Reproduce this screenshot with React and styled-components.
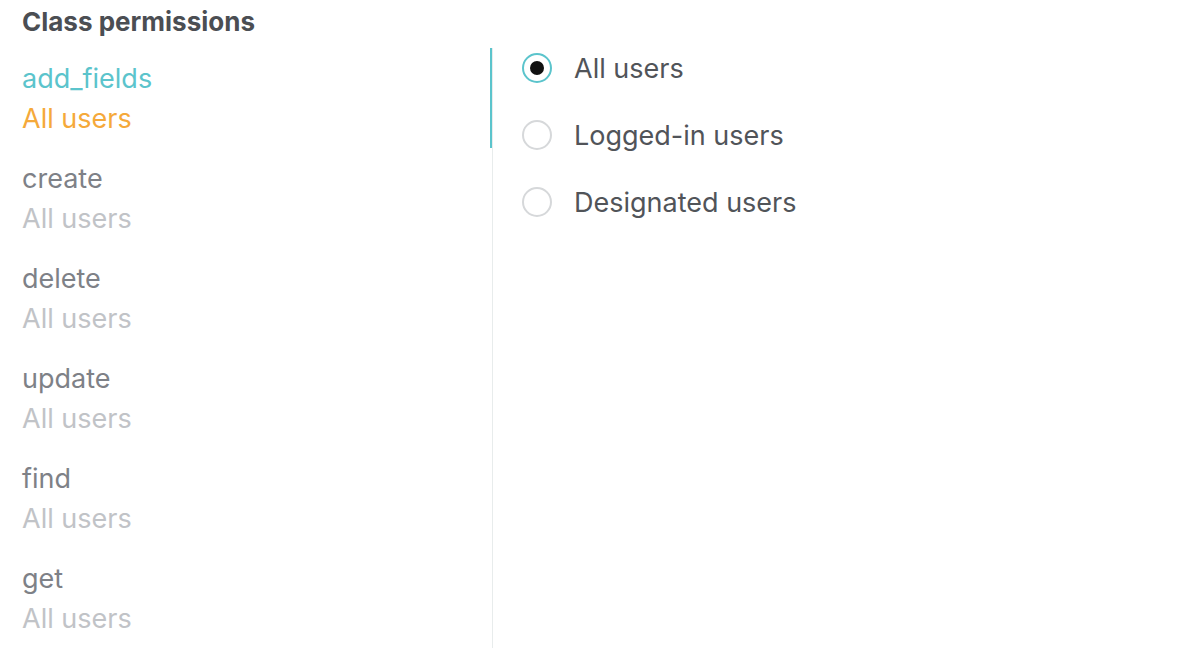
import React, { useState } from "react";
import styled, { createGlobalStyle } from "styled-components";

const GlobalStyle = createGlobalStyle`
  html, body { margin: 0; padding: 0; background: #ffffff; }
  body { font-family: Inter, "Noto Sans", "Liberation Sans", sans-serif; -webkit-font-smoothing: antialiased; }
  * { box-sizing: border-box; }
`;

const Page = styled.div`
  width: 1198px;
  height: 670px;
  background: #fff;
  overflow: hidden;
`;

const Title = styled.h2`
  margin: 0;
  padding: 0 0 0 22px;
  height: 48px;
  line-height: 44px;
  font-size: 26px;
  font-weight: 700;
  color: #4b4e53;
`;

const Columns = styled.div`
  display: flex;
  align-items: flex-start;
`;

const OpList = styled.ul`
  list-style: none;
  margin: 0;
  padding: 0;
  width: 493px;
  border-right: 1px solid #e8ecec;
`;

const OpItem = styled.li`
  position: relative;
  height: 100px;
  padding: 11px 0 9px 22px;
  cursor: pointer;
  &::after {
    content: "";
    position: absolute;
    top: 0;
    bottom: 0;
    right: 0;
    width: 2px;
    background: ${(p) => (p.$active ? "#5bc4cc" : "transparent")};
  }
`;

const OpName = styled.div`
  font-size: 27px;
  line-height: 40px;
  color: ${(p) => (p.$active ? "#5bc4cc" : "#7e8187")};
`;

const OpValue = styled.div`
  font-size: 27px;
  line-height: 40px;
  color: ${(p) => (p.$active ? "#f5a93a" : "#c1c3c7")};
`;

const Options = styled.div`
  display: flex;
  flex-direction: column;
  gap: 27px;
  padding-left: 29px;
`;

const OptionRow = styled.label`
  display: flex;
  align-items: center;
  height: 40px;
  gap: 22px;
  cursor: pointer;
`;

const RadioCircle = styled.span`
  width: 30px;
  height: 30px;
  border-radius: 50%;
  border: 2px solid ${(p) => (p.$checked ? "#5bc4cc" : "#d6d8da")};
  display: flex;
  align-items: center;
  justify-content: center;
  flex: none;
  &::after {
    content: "";
    width: 14px;
    height: 14px;
    border-radius: 50%;
    background: ${(p) => (p.$checked ? "#111" : "transparent")};
  }
`;

const OptionLabel = styled.span`
  font-size: 27px;
  color: #515459;
`;

const ops = ["add_fields", "create", "delete", "update", "find", "get"];
const choices = ["All users", "Logged-in users", "Designated users"];

export default function App() {
  const [active, setActive] = useState("add_fields");
  const [choice, setChoice] = useState("All users");
  return (
    <Page>
      <GlobalStyle />
      <Title>Class permissions</Title>
      <Columns>
        <OpList>
          {ops.map((op) => (
            <OpItem key={op} $active={op === active} onClick={() => setActive(op)}>
              <OpName $active={op === active}>{op}</OpName>
              <OpValue $active={op === active}>All users</OpValue>
            </OpItem>
          ))}
        </OpList>
        <Options>
          {choices.map((c) => (
            <OptionRow key={c} onClick={() => setChoice(c)}>
              <RadioCircle $checked={c === choice} />
              <OptionLabel>{c}</OptionLabel>
            </OptionRow>
          ))}
        </Options>
      </Columns>
    </Page>
  );
}
